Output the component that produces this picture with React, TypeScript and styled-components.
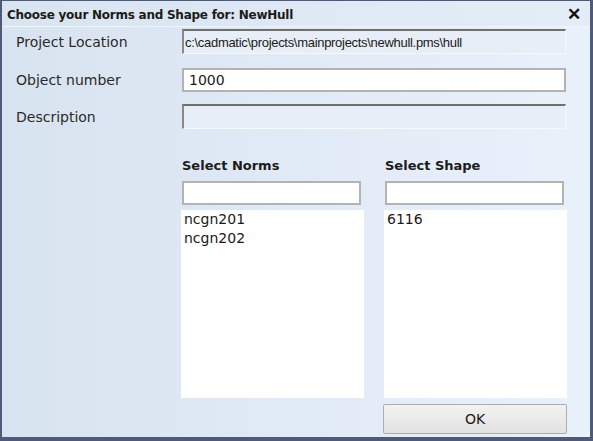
import React from 'react';
import styled, { createGlobalStyle } from 'styled-components';

const Global = createGlobalStyle`
  html, body { margin: 0; padding: 0; background: #ffffff; }
  body { width: 593px; height: 441px; overflow: hidden; font-family: "DejaVu Sans", Verdana, sans-serif; }
  * { box-sizing: border-box; }
`;

const Window = styled.div`
  width: 593px;
  height: 441px;
  border: 2px solid #4f5a78;
  border-top-width: 1px;
  border-right-width: 3px;
  border-bottom-width: 4px;
  background: linear-gradient(to right, #d8e3f0, #e9f1fb);
  display: flex;
  flex-direction: column;
`;

const TitleBar = styled.div`
  height: 26px;
  flex: none;
  display: flex;
  align-items: center;
  justify-content: space-between;
  padding: 2px 9px 0 5px;
  background: linear-gradient(to right, #d9e4f1, #e4ecf7);
  border-bottom: 1px solid #f0f5fb;
`;

const Title = styled.div`
  font-weight: bold;
  font-size: 12px;
  color: #1b1b1b;
  letter-spacing: -0.25px;
`;

const Close = styled.div`
  font-size: 17px;
  font-weight: bold;
  font-family: "Liberation Sans", Arial, sans-serif;
  color: #111;
  line-height: 1;
`;

const Body = styled.div`
  flex: 1;
  padding: 1px 0 0 14px;
  display: flex;
  flex-direction: column;
`;

const Row = styled.div<{ $mt: number; $h: number }>`
  display: grid;
  grid-template-columns: 166px 384px;
  align-items: center;
  margin-top: ${p => p.$mt}px;
  height: ${p => p.$h}px;
`;

const Label = styled.div`
  font-size: 14px;
  color: #2a2a2a;
`;

const ReadOnlyBox = styled.div`
  height: 100%;
  background: #e7eef7;
  border-top: 2px solid #6f6f6f;
  border-left: 2px solid #8a8a8a;
  border-right: 1px solid #f7f9fc;
  border-bottom: 1px solid #f7f9fc;
  display: flex;
  align-items: center;
  padding-left: 1px;
  font-family: "Liberation Sans", Arial, sans-serif;
  font-size: 13px;
  letter-spacing: -0.3px;
  color: #1a1a1a;
  white-space: nowrap;
  overflow: hidden;
`;

const EditBox = styled.div`
  height: 100%;
  background: #ffffff;
  border: 2px solid #b3b3b3;
  display: flex;
  align-items: center;
  padding-left: 5px;
  font-size: 14px;
  color: #1a1a1a;
`;

const Lower = styled.div`
  margin: 29px 0 0 165px;
  display: grid;
  grid-template-columns: 183px 183px;
  column-gap: 20px;
`;

const Column = styled.div`
  display: flex;
  flex-direction: column;
`;

const Heading = styled.div`
  font-weight: bold;
  font-size: 13px;
  color: #1b1b1b;
  height: 16px;
  line-height: 16px;
  padding-left: 1px;
`;

const Filter = styled.div<{ $w: number }>`
  margin: 7px 0 0 1px;
  width: ${p => p.$w}px;
  height: 24px;
  background: #ffffff;
  border: 2px solid #b3b3b3;
`;

const List = styled.div`
  margin-top: 5px;
  height: 188px;
  background: #ffffff;
  padding: 0 0 0 3px;
  font-size: 14px;
  line-height: 19px;
  color: #1a1a1a;
`;

const Button = styled.div`
  margin-top: 6px;
  margin-left: -1px;
  height: 30px;
  border: 1px solid #acacac;
  border-radius: 2px;
  background: linear-gradient(to bottom, #f2f2f2, #e2e2e2);
  display: flex;
  align-items: center;
  justify-content: center;
  font-size: 14px;
  color: #1a1a1a;
`;

export default function App() {
  return (
    <>
      <Global />
      <Window>
        <TitleBar>
          <Title>Choose your Norms and Shape for: NewHull</Title>
          <Close>✕</Close>
        </TitleBar>
        <Body>
          <Row $mt={1} $h={25}>
            <Label>Project Location</Label>
            <ReadOnlyBox>c:\cadmatic\projects\mainprojects\newhull.pms\hull</ReadOnlyBox>
          </Row>
          <Row $mt={14} $h={24}>
            <Label>Object number</Label>
            <EditBox>1000</EditBox>
          </Row>
          <Row $mt={12} $h={25}>
            <Label>Description</Label>
            <ReadOnlyBox />
          </Row>
          <Lower>
            <Column>
              <Heading>Select Norms</Heading>
              <Filter $w={179} />
              <List>
                <div>ncgn201</div>
                <div>ncgn202</div>
              </List>
            </Column>
            <Column>
              <Heading>Select Shape</Heading>
              <Filter $w={179} />
              <List>
                <div>6116</div>
              </List>
              <Button>OK</Button>
            </Column>
          </Lower>
        </Body>
      </Window>
    </>
  );
}
